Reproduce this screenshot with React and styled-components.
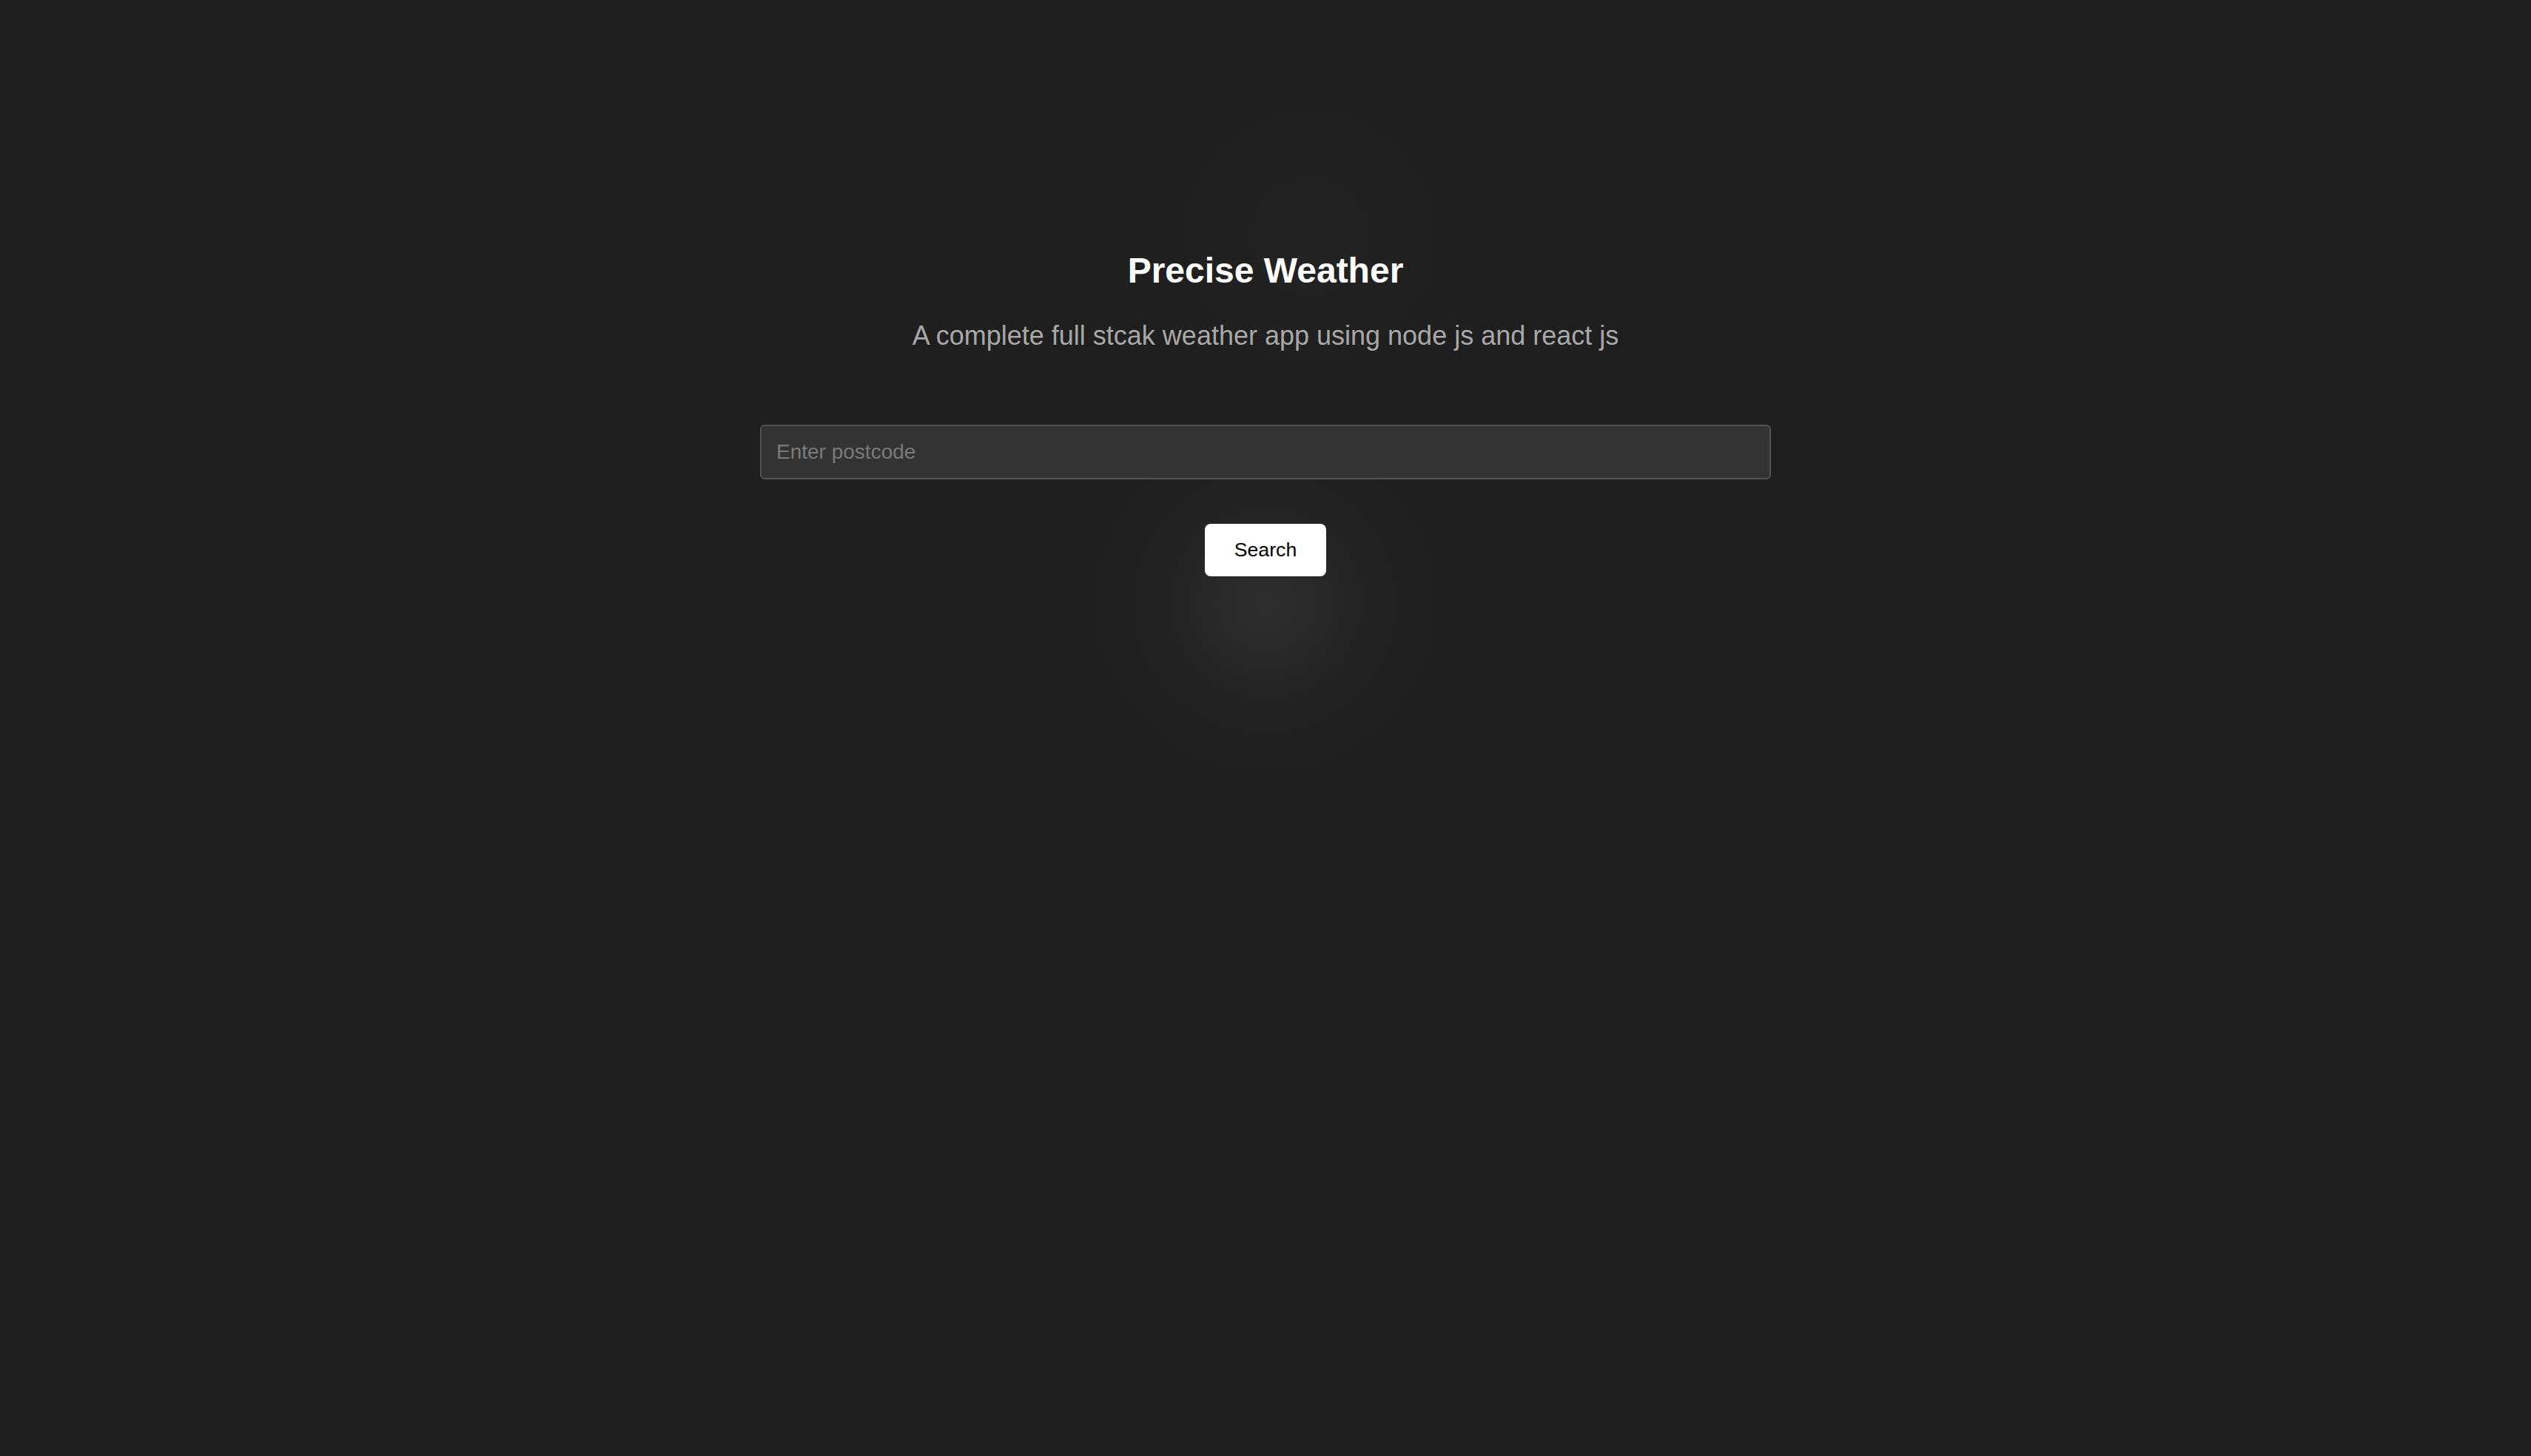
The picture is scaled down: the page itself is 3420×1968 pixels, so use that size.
import React, { useState } from 'react';
import styled, { createGlobalStyle } from 'styled-components';

const GlobalStyle = createGlobalStyle`
  html, body {
    margin: 0;
    padding: 0;
    background: #1f1f1f;
  }
  * {
    box-sizing: border-box;
  }
`;

function App() {
  const [postcode, setPostcode] = useState('');

  const handleSearch = (event) => {
    event.preventDefault();
    if (!postcode) {
      console.log('Empty postcode');
      return;
    }
    console.log(`Searching weather for ${postcode}`);
  };

  return (
    <Page>
      <GlobalStyle />
      <Header>
        <Title>Precise Weather</Title>
        <Subtitle>A complete full stcak weather app using node js and react js</Subtitle>
      </Header>
      <SearchForm onSubmit={handleSearch}>
        <PostcodeInput
          type="text"
          placeholder="Enter postcode"
          value={postcode}
          onChange={(e) => setPostcode(e.target.value)}
        />
        <SearchButton type="submit">Search</SearchButton>
      </SearchForm>
    </Page>
  );
}

const Page = styled.div`
  min-height: 100vh;
  display: flex;
  flex-direction: column;
  align-items: center;
  padding-top: 338px;
  font-family: "Liberation Sans", Arial, sans-serif;
  background-color: #1f1f1f;
  background-image:
    radial-gradient(circle 240px at 50% 815px, rgba(255, 255, 255, 0.065), rgba(255, 255, 255, 0.02) 55%, rgba(255, 255, 255, 0) 100%),
    radial-gradient(circle 190px at 1770px 320px, rgba(255, 255, 255, 0.018), rgba(255, 255, 255, 0) 100%);
`;

const Header = styled.header`
  display: flex;
  flex-direction: column;
  align-items: center;
  gap: 40px;
`;

const Title = styled.h1`
  margin: 0;
  font-size: 48px;
  font-weight: bold;
  color: #ffffff;
`;

const Subtitle = styled.p`
  margin: 0;
  font-size: 36px;
  color: #a8a8a8;
`;

const SearchForm = styled.form`
  display: flex;
  flex-direction: column;
  align-items: center;
  gap: 60px;
  margin-top: 99px;
`;

const PostcodeInput = styled.input`
  width: 1366px;
  height: 74px;
  padding: 0 20px;
  border: 2px solid #515151;
  border-radius: 6px;
  background: #333333;
  color: #ffffff;
  font-family: "Liberation Sans", Arial, sans-serif;
  font-size: 28px;
  outline: none;

  &::placeholder {
    color: #7a7a7a;
  }
`;

const SearchButton = styled.button`
  width: 164px;
  height: 71px;
  padding: 0;
  border: none;
  border-radius: 8px;
  background: #ffffff;
  color: #000000;
  font-family: "Liberation Sans", Arial, sans-serif;
  font-size: 26.67px;
  cursor: pointer;
`;

export default App;
